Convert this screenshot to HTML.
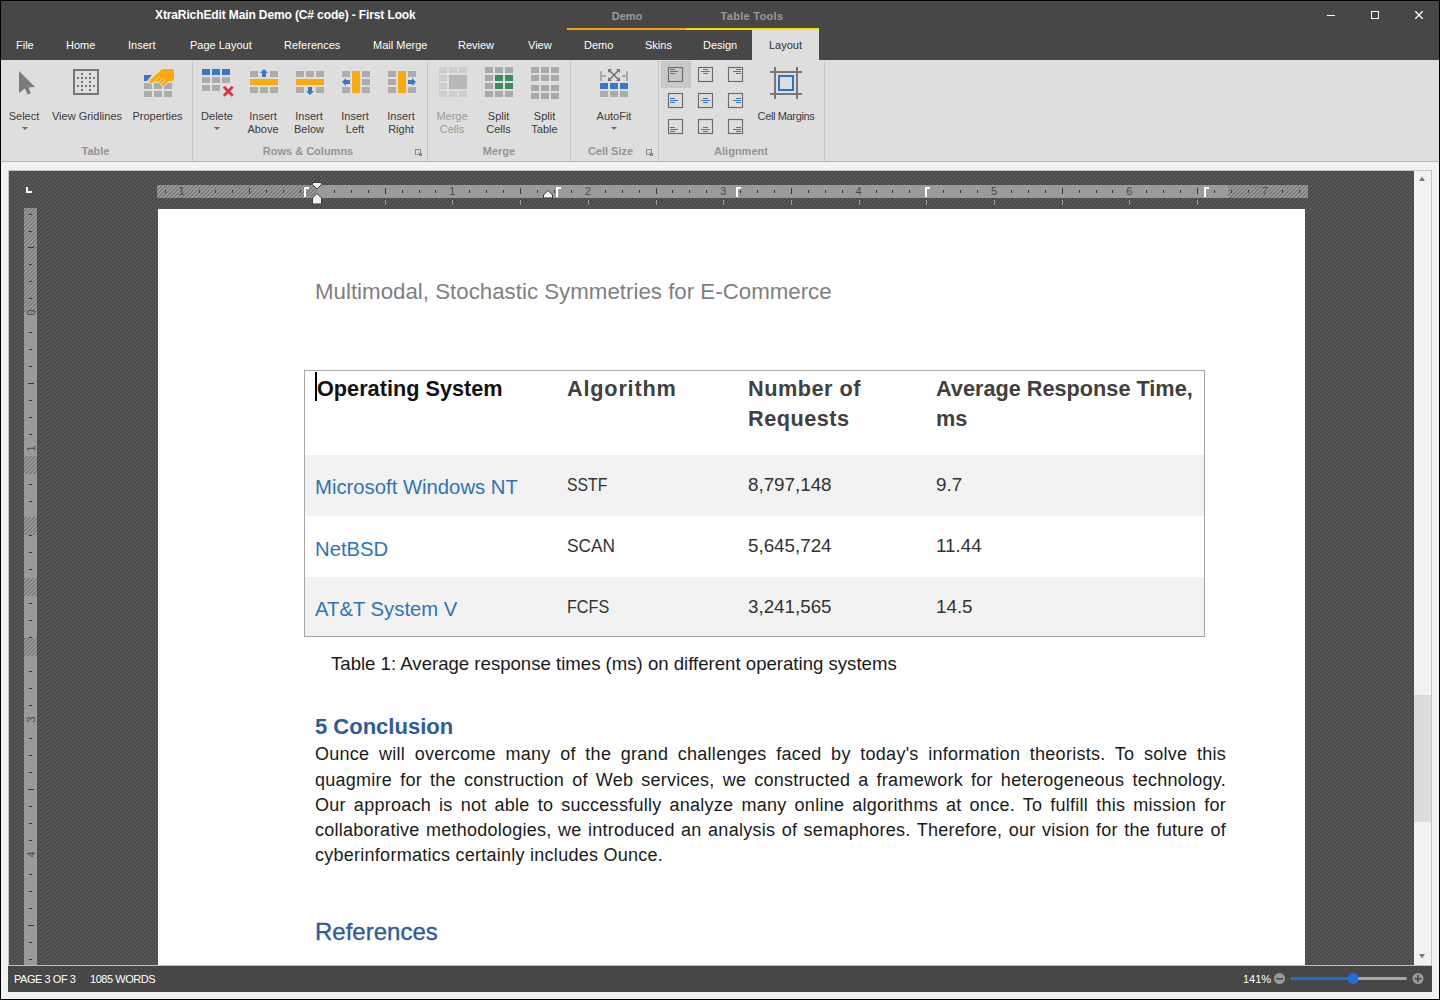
<!DOCTYPE html>
<html><head><meta charset="utf-8">
<style>
*{margin:0;padding:0;box-sizing:border-box}
html,body{width:1440px;height:1000px;overflow:hidden;background:#f2f2f2;font-family:"Liberation Sans",sans-serif}
.a{position:absolute}
#frame{position:absolute;left:0;top:0;width:1440px;height:1000px;border:1px solid #000;pointer-events:none;z-index:100}
#title{left:1px;top:1px;width:1438px;height:59px;background:#474747}
.tt{color:#fff;font-size:12px;line-height:13px;white-space:nowrap}
.tc{text-align:center;line-height:13px;white-space:nowrap}
.tab{top:39px;color:#fff;font-size:11px;line-height:13px;white-space:nowrap}
#ribbon{left:1px;top:60px;width:1438px;height:102px;background:#dedede;border-bottom:1px solid #b4b4b4}
.lb{position:absolute;width:100px;text-align:center;font-size:11px;line-height:13px;color:#3b3b3b;white-space:nowrap}
.gl{font-weight:bold;color:#949494}
#docarea{left:9px;top:171px;width:1405px;height:794px;overflow:hidden}
#status{left:8px;top:965px;width:1424px;height:27px;background:#474747;border-top:1px solid #bdbdbd}
#vscroll{left:1414px;top:171px;width:18px;height:794px;background:#f2f2f2;border-right:1px solid #bdbdbd}
.dt{white-space:nowrap;line-height:1}
.rd{width:20px;text-align:center;font-size:11px;line-height:13px;color:#4a4a4a}
.rdv{width:20px;height:13px;text-align:center;font-size:11px;line-height:13px;color:#4a4a4a;transform:rotate(-90deg)}
.sb{color:#fff;font-size:11px;line-height:13px;white-space:nowrap}
</style></head><body>
<div id="frame"></div>
<div id="title" class="a"></div>
<div id="ribbon" class="a"></div>
<!-- TITLE BAR -->
<div class="a tt" style="left:155px;top:9px;font-weight:bold;font-size:12px;letter-spacing:-0.12px">XtraRichEdit Main Demo (C# code) - First Look</div>
<div class="a tc" style="left:610px;top:10px;width:34px;font-weight:bold;color:#9a9a9a;font-size:11px">Demo</div>
<div class="a tc" style="left:720px;top:10px;width:64px;font-weight:bold;color:#9a9a9a;font-size:11px;letter-spacing:0.3px">Table Tools</div>
<div class="a" style="left:567px;top:28px;width:119px;height:2px;background:#f7a20a"></div>
<div class="a" style="left:686px;top:28px;width:133px;height:2px;background:#f4e000"></div>
<div class="a" style="left:752px;top:30px;width:67px;height:31px;background:#dedede"></div>
<svg class="a" style="left:1300px;top:0" width="140" height="30" viewBox="1300 0 140 30">
<rect x="1327" y="15" width="8" height="1" fill="#fff" shape-rendering="crispEdges"/>
<rect x="1371.5" y="11.5" width="7" height="7" fill="none" stroke="#fff" stroke-width="1" shape-rendering="crispEdges"/>
<path d="M1415.3 11.3 L1422.7 18.7 M1422.7 11.3 L1415.3 18.7" stroke="#fff" stroke-width="1.3"/>
</svg>
<!-- TABS -->
<div class="a tab" style="left:16px">File</div>
<div class="a tab" style="left:66px">Home</div>
<div class="a tab" style="left:128px">Insert</div>
<div class="a tab" style="left:190px">Page Layout</div>
<div class="a tab" style="left:284px">References</div>
<div class="a tab" style="left:373px">Mail Merge</div>
<div class="a tab" style="left:458px">Review</div>
<div class="a tab" style="left:528px">View</div>
<div class="a tab" style="left:584px">Demo</div>
<div class="a tab" style="left:645px">Skins</div>
<div class="a tab" style="left:703px">Design</div>
<div class="a tab" style="left:769px;color:#333">Layout</div>
<!-- RIBBON -->
<svg class="a" style="left:0;top:0" width="900" height="162" viewBox="0 0 900 162">
<g shape-rendering="crispEdges">
<!-- separators -->
<rect x="192" y="61" width="1" height="100" fill="#c4c4c4"/>
<rect x="427" y="61" width="1" height="100" fill="#c4c4c4"/>
<rect x="570" y="61" width="1" height="100" fill="#c4c4c4"/>
<rect x="658" y="61" width="1" height="100" fill="#c4c4c4"/>
<rect x="824" y="61" width="1" height="100" fill="#c4c4c4"/>
<!-- gridlines icon -->
<rect x="74" y="70" width="24" height="24" fill="none" stroke="#777" stroke-width="2"/>
<g fill="#777">
<rect x="81" y="73" width="2" height="2"/><rect x="89" y="73" width="2" height="2"/>
<rect x="77" y="77" width="2" height="2"/><rect x="81" y="77" width="2" height="2"/><rect x="85" y="77" width="2" height="2"/><rect x="89" y="77" width="2" height="2"/><rect x="93" y="77" width="2" height="2"/>
<rect x="81" y="81" width="2" height="2"/><rect x="89" y="81" width="2" height="2"/>
<rect x="77" y="85" width="2" height="2"/><rect x="81" y="85" width="2" height="2"/><rect x="85" y="85" width="2" height="2"/><rect x="89" y="85" width="2" height="2"/><rect x="93" y="85" width="2" height="2"/>
<rect x="81" y="89" width="2" height="2"/><rect x="89" y="89" width="2" height="2"/>
</g>
<!-- properties icon cells -->
<g fill="#acacac">
<rect x="144" y="83" width="8" height="6"/><rect x="154" y="83" width="8" height="6"/><rect x="164" y="83" width="8" height="6"/>
<rect x="144" y="91" width="8" height="6"/><rect x="154" y="91" width="8" height="6"/><rect x="164" y="91" width="8" height="6"/>
</g>
<!-- delete -->
<g fill="#3a76c9">
<rect x="202" y="69" width="8" height="6"/><rect x="212" y="69" width="8" height="6"/><rect x="222" y="69" width="8" height="6"/>
</g>
<g fill="#acacac">
<rect x="202" y="77" width="8" height="6"/><rect x="212" y="77" width="8" height="6"/><rect x="222" y="77" width="8" height="6"/>
<rect x="202" y="85" width="8" height="6"/><rect x="212" y="85" width="8" height="6"/>
</g>
<!-- insert above -->
<g fill="#acacac">
<rect x="250" y="71" width="8" height="6"/><rect x="270" y="71" width="8" height="6"/>
<rect x="250" y="87" width="8" height="6"/><rect x="260" y="87" width="8" height="6"/><rect x="270" y="87" width="8" height="6"/>
</g>
<rect x="250" y="79" width="28" height="6" fill="#fba90b"/>
<!-- insert below -->
<g fill="#acacac">
<rect x="296" y="71" width="8" height="6"/><rect x="306" y="71" width="8" height="6"/><rect x="316" y="71" width="8" height="6"/>
<rect x="296" y="87" width="8" height="6"/><rect x="316" y="87" width="8" height="6"/>
</g>
<rect x="296" y="79" width="28" height="6" fill="#fba90b"/>
<!-- insert left -->
<g fill="#acacac">
<rect x="342" y="71" width="8" height="6"/><rect x="342" y="87" width="8" height="6"/>
<rect x="362" y="71" width="8" height="6"/><rect x="362" y="79" width="8" height="6"/><rect x="362" y="87" width="8" height="6"/>
</g>
<rect x="352" y="71" width="8" height="22" fill="#fba90b"/>
<!-- insert right -->
<g fill="#acacac">
<rect x="388" y="71" width="8" height="6"/><rect x="388" y="79" width="8" height="6"/><rect x="388" y="87" width="8" height="6"/>
<rect x="408" y="71" width="8" height="6"/><rect x="408" y="87" width="8" height="6"/>
</g>
<rect x="398" y="71" width="8" height="22" fill="#fba90b"/>
<!-- merge cells (disabled) -->
<g fill="#cdcdcd">
<rect x="439" y="67" width="8" height="6"/><rect x="449" y="67" width="8" height="6"/><rect x="459" y="67" width="8" height="6"/>
<rect x="439" y="75" width="8" height="6"/><rect x="439" y="83" width="8" height="6"/>
<rect x="439" y="91" width="8" height="6"/><rect x="449" y="91" width="8" height="6"/><rect x="459" y="91" width="8" height="6"/>
</g>
<rect x="449" y="75" width="18" height="14" fill="#b8b8b8"/>
<!-- split cells -->
<g fill="#a9a9a9">
<rect x="485" y="67" width="8" height="6"/><rect x="495" y="67" width="8" height="6"/><rect x="505" y="67" width="8" height="6"/>
<rect x="485" y="75" width="8" height="6"/><rect x="485" y="83" width="8" height="6"/>
<rect x="485" y="91" width="8" height="6"/><rect x="495" y="91" width="8" height="6"/><rect x="505" y="91" width="8" height="6"/>
</g>
<g fill="#3a8c5a">
<rect x="495" y="75" width="8" height="6"/><rect x="505" y="75" width="8" height="6"/>
<rect x="495" y="83" width="8" height="6"/><rect x="505" y="83" width="8" height="6"/>
</g>
<!-- split table -->
<g fill="#a9a9a9">
<rect x="531" y="67" width="8" height="6"/><rect x="541" y="67" width="8" height="6"/><rect x="551" y="67" width="8" height="6"/>
<rect x="531" y="75" width="8" height="6"/><rect x="541" y="75" width="8" height="6"/><rect x="551" y="75" width="8" height="6"/>
<rect x="531" y="85" width="8" height="6"/><rect x="541" y="85" width="8" height="6"/><rect x="551" y="85" width="8" height="6"/>
<rect x="531" y="93" width="8" height="6"/><rect x="541" y="93" width="8" height="6"/><rect x="551" y="93" width="8" height="6"/>
</g>
<!-- autofit -->
<g fill="#3a76c9"><rect x="600" y="83" width="8" height="6"/><rect x="610" y="83" width="8" height="6"/><rect x="620" y="83" width="8" height="6"/></g>
<g fill="#acacac"><rect x="600" y="91" width="8" height="6"/><rect x="610" y="91" width="8" height="6"/><rect x="620" y="91" width="8" height="6"/>
<rect x="600" y="71" width="2" height="10"/><rect x="602" y="75" width="4" height="2"/>
<rect x="626" y="71" width="2" height="10"/><rect x="622" y="75" width="4" height="2"/></g>
<!-- align highlight -->
<rect x="661" y="61" width="30" height="27" fill="#c8c8c8"/>
<!-- cell margins -->
<g fill="#777">
<rect x="774" y="67" width="2" height="32"/><rect x="796" y="67" width="2" height="32"/>
<rect x="770" y="71" width="32" height="2"/><rect x="770" y="93" width="32" height="2"/>
</g>
<rect x="779" y="76" width="14" height="14" fill="none" stroke="#2f6fc4" stroke-width="2"/>
<!-- dialog launchers -->
<rect x="415.5" y="149.5" width="5" height="5" fill="none" stroke="#8a8a8a" stroke-width="1"/><path d="M418 152 L421.5 155.5 M419 155.5 h2.5 v-2.5" stroke="#8a8a8a" stroke-width="1" fill="none"/>
<rect x="646.5" y="149.5" width="5" height="5" fill="none" stroke="#8a8a8a" stroke-width="1"/><path d="M649 152 L652.5 155.5 M650 155.5 h2.5 v-2.5" stroke="#8a8a8a" stroke-width="1" fill="none"/>
</g>
<!-- cursor -->
<path d="M19 71 L35 87 L28.5 87.5 L30.8 93.2 L27.6 94.6 L25 88.6 L19 93 Z" fill="#7a7a7a"/>
<!-- properties hand -->
<path d="M144 75 H152 L147 81 H144 Z" fill="#3a76c9"/>
<path d="M149.5 82.5 Q149 80.5 150.5 79.5 L161 70 Q162 69 163.5 69 H172 Q174 69 174 71 V79 Q174 81 172 81 H168.5 L164 85.5 Q162.5 86.5 161.5 85 L160.5 83.5 L159.5 83 L157 81.5 L155.5 80.5 L151.5 83.5 Q150 84 149.5 82.5 Z" fill="#fba90b" stroke="#e6e6e6" stroke-width="1.2" paint-order="stroke"/>
<path d="M155.5 80.5 L160 76 M158 83 L162.5 78.5 M160.5 84.5 L165 80" stroke="#f4e6c8" stroke-width="0.8"/>
<!-- delete X -->
<path d="M223.8 86.8 L232.7 95.7 M232.7 86.8 L223.8 95.7" stroke="#e0313f" stroke-width="2.7"/>
<!-- arrows -->
<path d="M264 69 L268 73 H266 V77 H262 V73 H260 Z" fill="#3a76c9"/>
<path d="M310 95 L314 91 H312 V87 H308 V91 H306 Z" fill="#3a76c9"/>
<path d="M342 82 L346 78 V80 H350 V84 H346 V86 Z" fill="#3a76c9"/>
<path d="M416 82 L412 78 V80 H408 V84 H412 V86 Z" fill="#3a76c9"/>
<!-- autofit X -->
<g stroke="#777" stroke-width="1.7"><path d="M609.5 70.5 L618.5 79.5 M618.5 70.5 L609.5 79.5"/></g>
<g fill="#777">
<path d="M608 69 H612 L608 73 Z"/><path d="M620 69 H616 L620 73 Z"/>
<path d="M608 81 H612 L608 77 Z"/><path d="M620 81 H616 L620 77 Z"/>
</g>
<!-- alignment boxes -->
<g fill="none" stroke="#6c6c6c" stroke-width="1.15">
<rect x="668.5" y="67.5" width="14" height="14"/><rect x="698.5" y="67.5" width="14" height="14"/><rect x="728.5" y="67.5" width="14" height="14"/><rect x="668.5" y="93.5" width="14" height="14"/><rect x="698.5" y="93.5" width="14" height="14"/><rect x="728.5" y="93.5" width="14" height="14"/><rect x="668.5" y="119.5" width="14" height="14"/><rect x="698.5" y="119.5" width="14" height="14"/><rect x="728.5" y="119.5" width="14" height="14"/>
</g>
<g stroke="#3a76c9" stroke-width="1">
<path d="M670 69.5 h5 M670 71.5 h8 M670 73.5 h5"/>
<path d="M703 69.5 h5 M701 71.5 h9 M703 73.5 h5"/>
<path d="M736 69.5 h5 M733 71.5 h8 M736 73.5 h5"/>
<path d="M670 98.5 h5 M670 100.5 h8 M670 102.5 h5"/>
<path d="M703 98.5 h5 M701 100.5 h9 M703 102.5 h5"/>
<path d="M736 98.5 h5 M733 100.5 h8 M736 102.5 h5"/>
<path d="M670 127.5 h5 M670 129.5 h8 M670 131.5 h5"/>
<path d="M703 127.5 h5 M701 129.5 h9 M703 131.5 h5"/>
<path d="M736 127.5 h5 M733 129.5 h8 M736 131.5 h5"/>
</g>
<!-- dropdown arrows -->
<g fill="#6a6a6a">
<path d="M22 127 H28 L25 130 Z"/><path d="M214 127 H220 L217 130 Z"/><path d="M611 127 H617 L614 130 Z"/>
</g>
</svg>
<div class="lb" style="left:-26px;top:110px">Select</div>
<div class="lb" style="left:37px;top:110px">View Gridlines</div>
<div class="lb" style="left:107.5px;top:110px">Properties</div>
<div class="lb" style="left:167px;top:110px">Delete</div>
<div class="lb" style="left:213px;top:110px">Insert<br>Above</div>
<div class="lb" style="left:259px;top:110px">Insert<br>Below</div>
<div class="lb" style="left:305px;top:110px">Insert<br>Left</div>
<div class="lb" style="left:351px;top:110px">Insert<br>Right</div>
<div class="lb" style="left:402px;top:110px;color:#9a9a9a">Merge<br>Cells</div>
<div class="lb" style="left:448.5px;top:110px">Split<br>Cells</div>
<div class="lb" style="left:494.5px;top:110px">Split<br>Table</div>
<div class="lb" style="left:564px;top:110px">AutoFit</div>
<div class="lb" style="left:736px;top:110px;letter-spacing:-0.35px">Cell Margins</div>
<div class="lb gl" style="left:45.5px;top:145px">Table</div>
<div class="lb gl" style="left:258px;top:145px">Rows &amp; Columns</div>
<div class="lb gl" style="left:449px;top:145px">Merge</div>
<div class="lb gl" style="left:560.5px;top:145px">Cell Size</div>
<div class="lb gl" style="left:691px;top:145px">Alignment</div>
<div id="docarea" class="a">
<svg width="1405" height="794" style="position:absolute;left:0;top:0">
<defs><pattern id="st" x="0" y="0" width="4" height="4" patternUnits="userSpaceOnUse">
<rect width="4" height="4" fill="#484848"/>
<rect x="0" y="0" width="2" height="1" fill="#595959"/>
<rect x="3" y="1" width="1" height="1" fill="#595959"/><rect x="0" y="1" width="1" height="1" fill="#595959"/>
<rect x="2" y="2" width="2" height="1" fill="#595959"/>
<rect x="1" y="3" width="2" height="1" fill="#595959"/>
</pattern>
<pattern id="rs" x="0" y="0" width="4" height="4" patternUnits="userSpaceOnUse">
<rect width="4" height="4" fill="#7a7a7a"/>
<rect x="0" y="0" width="2" height="1" fill="#9c9c9c"/>
<rect x="3" y="1" width="1" height="1" fill="#9c9c9c"/><rect x="0" y="1" width="1" height="1" fill="#9c9c9c"/>
<rect x="2" y="2" width="2" height="1" fill="#9c9c9c"/>
<rect x="1" y="3" width="2" height="1" fill="#9c9c9c"/>
</pattern></defs>
<rect width="1405" height="794" fill="url(#st)" shape-rendering="crispEdges"/>
<pattern id="st2" href="#st" x="2" y="0"/>
<rect x="38" y="37" width="1367" height="757" fill="url(#st2)" shape-rendering="crispEdges"/>
</svg>
</div>
<svg class="a" style="left:0;top:0" width="1440" height="1000" viewBox="0 0 1440 1000" shape-rendering="crispEdges">
<path d="M26 187 h2 v4 h4 v2 h-6 z" fill="#fff"/>
<rect x="157" y="185" width="160" height="13" fill="url(#rs)"/>
<rect x="317" y="185" width="911" height="13" fill="#9a9a9a"/>
<rect x="1228" y="185" width="80" height="13" fill="url(#rs)"/>
<rect x="165" y="190" width="1" height="3" fill="#3a3a3a"/>
<rect x="199" y="190" width="1" height="3" fill="#3a3a3a"/>
<rect x="215" y="190" width="1" height="3" fill="#3a3a3a"/>
<rect x="232" y="190" width="1" height="3" fill="#3a3a3a"/>
<rect x="249" y="188" width="1" height="6" fill="#3a3a3a"/>
<rect x="266" y="190" width="1" height="3" fill="#3a3a3a"/>
<rect x="283" y="190" width="1" height="3" fill="#3a3a3a"/>
<rect x="300" y="190" width="1" height="3" fill="#3a3a3a"/>
<rect x="334" y="190" width="1" height="3" fill="#3a3a3a"/>
<rect x="351" y="190" width="1" height="3" fill="#3a3a3a"/>
<rect x="368" y="190" width="1" height="3" fill="#3a3a3a"/>
<rect x="385" y="188" width="1" height="6" fill="#3a3a3a"/>
<rect x="402" y="190" width="1" height="3" fill="#3a3a3a"/>
<rect x="419" y="190" width="1" height="3" fill="#3a3a3a"/>
<rect x="435" y="190" width="1" height="3" fill="#3a3a3a"/>
<rect x="469" y="190" width="1" height="3" fill="#3a3a3a"/>
<rect x="486" y="190" width="1" height="3" fill="#3a3a3a"/>
<rect x="503" y="190" width="1" height="3" fill="#3a3a3a"/>
<rect x="520" y="188" width="1" height="6" fill="#3a3a3a"/>
<rect x="537" y="190" width="1" height="3" fill="#3a3a3a"/>
<rect x="554" y="190" width="1" height="3" fill="#3a3a3a"/>
<rect x="571" y="190" width="1" height="3" fill="#3a3a3a"/>
<rect x="605" y="190" width="1" height="3" fill="#3a3a3a"/>
<rect x="622" y="190" width="1" height="3" fill="#3a3a3a"/>
<rect x="639" y="190" width="1" height="3" fill="#3a3a3a"/>
<rect x="656" y="188" width="1" height="6" fill="#3a3a3a"/>
<rect x="672" y="190" width="1" height="3" fill="#3a3a3a"/>
<rect x="689" y="190" width="1" height="3" fill="#3a3a3a"/>
<rect x="706" y="190" width="1" height="3" fill="#3a3a3a"/>
<rect x="740" y="190" width="1" height="3" fill="#3a3a3a"/>
<rect x="757" y="190" width="1" height="3" fill="#3a3a3a"/>
<rect x="774" y="190" width="1" height="3" fill="#3a3a3a"/>
<rect x="791" y="188" width="1" height="6" fill="#3a3a3a"/>
<rect x="808" y="190" width="1" height="3" fill="#3a3a3a"/>
<rect x="825" y="190" width="1" height="3" fill="#3a3a3a"/>
<rect x="842" y="190" width="1" height="3" fill="#3a3a3a"/>
<rect x="876" y="190" width="1" height="3" fill="#3a3a3a"/>
<rect x="892" y="190" width="1" height="3" fill="#3a3a3a"/>
<rect x="909" y="190" width="1" height="3" fill="#3a3a3a"/>
<rect x="926" y="188" width="1" height="6" fill="#3a3a3a"/>
<rect x="943" y="190" width="1" height="3" fill="#3a3a3a"/>
<rect x="960" y="190" width="1" height="3" fill="#3a3a3a"/>
<rect x="977" y="190" width="1" height="3" fill="#3a3a3a"/>
<rect x="1011" y="190" width="1" height="3" fill="#3a3a3a"/>
<rect x="1028" y="190" width="1" height="3" fill="#3a3a3a"/>
<rect x="1045" y="190" width="1" height="3" fill="#3a3a3a"/>
<rect x="1062" y="188" width="1" height="6" fill="#3a3a3a"/>
<rect x="1079" y="190" width="1" height="3" fill="#3a3a3a"/>
<rect x="1096" y="190" width="1" height="3" fill="#3a3a3a"/>
<rect x="1112" y="190" width="1" height="3" fill="#3a3a3a"/>
<rect x="1146" y="190" width="1" height="3" fill="#3a3a3a"/>
<rect x="1163" y="190" width="1" height="3" fill="#3a3a3a"/>
<rect x="1180" y="190" width="1" height="3" fill="#3a3a3a"/>
<rect x="1197" y="188" width="1" height="6" fill="#3a3a3a"/>
<rect x="1214" y="190" width="1" height="3" fill="#3a3a3a"/>
<rect x="1231" y="190" width="1" height="3" fill="#3a3a3a"/>
<rect x="1248" y="190" width="1" height="3" fill="#3a3a3a"/>
<rect x="1282" y="190" width="1" height="3" fill="#3a3a3a"/>
<rect x="1299" y="190" width="1" height="3" fill="#3a3a3a"/>
<rect x="385" y="200" width="1" height="5" fill="#9a9a9a"/>
<rect x="452" y="200" width="1" height="5" fill="#9a9a9a"/>
<rect x="520" y="200" width="1" height="5" fill="#9a9a9a"/>
<rect x="588" y="200" width="1" height="5" fill="#9a9a9a"/>
<rect x="656" y="200" width="1" height="5" fill="#9a9a9a"/>
<rect x="723" y="200" width="1" height="5" fill="#9a9a9a"/>
<rect x="791" y="200" width="1" height="5" fill="#9a9a9a"/>
<rect x="859" y="200" width="1" height="5" fill="#9a9a9a"/>
<rect x="926" y="200" width="1" height="5" fill="#9a9a9a"/>
<rect x="994" y="200" width="1" height="5" fill="#9a9a9a"/>
<rect x="1062" y="200" width="1" height="5" fill="#9a9a9a"/>
<rect x="1129" y="200" width="1" height="5" fill="#9a9a9a"/>
<rect x="1197" y="200" width="1" height="5" fill="#9a9a9a"/>
<rect x="24" y="208" width="13" height="105" fill="url(#rs)"/>
<rect x="24" y="313" width="13" height="652" fill="#9a9a9a"/>
<rect x="24" y="456" width="13" height="18" fill="url(#rs)"/>
<rect x="24" y="517" width="13" height="18" fill="url(#rs)"/>
<rect x="24" y="578" width="13" height="18" fill="url(#rs)"/>
<rect x="24" y="638" width="13" height="18" fill="url(#rs)"/>
<rect x="29" y="214" width="3" height="1" fill="#3a3a3a"/>
<rect x="29" y="231" width="3" height="1" fill="#3a3a3a"/>
<rect x="28" y="247" width="6" height="1" fill="#3a3a3a"/>
<rect x="29" y="264" width="3" height="1" fill="#3a3a3a"/>
<rect x="29" y="281" width="3" height="1" fill="#3a3a3a"/>
<rect x="29" y="298" width="3" height="1" fill="#3a3a3a"/>
<rect x="29" y="332" width="3" height="1" fill="#3a3a3a"/>
<rect x="29" y="349" width="3" height="1" fill="#3a3a3a"/>
<rect x="29" y="366" width="3" height="1" fill="#3a3a3a"/>
<rect x="28" y="383" width="6" height="1" fill="#3a3a3a"/>
<rect x="29" y="400" width="3" height="1" fill="#3a3a3a"/>
<rect x="29" y="417" width="3" height="1" fill="#3a3a3a"/>
<rect x="29" y="434" width="3" height="1" fill="#3a3a3a"/>
<rect x="29" y="484" width="3" height="1" fill="#3a3a3a"/>
<rect x="29" y="501" width="3" height="1" fill="#3a3a3a"/>
<rect x="29" y="535" width="3" height="1" fill="#3a3a3a"/>
<rect x="29" y="552" width="3" height="1" fill="#3a3a3a"/>
<rect x="29" y="569" width="3" height="1" fill="#3a3a3a"/>
<rect x="29" y="603" width="3" height="1" fill="#3a3a3a"/>
<rect x="29" y="620" width="3" height="1" fill="#3a3a3a"/>
<rect x="29" y="637" width="3" height="1" fill="#3a3a3a"/>
<rect x="29" y="671" width="3" height="1" fill="#3a3a3a"/>
<rect x="29" y="688" width="3" height="1" fill="#3a3a3a"/>
<rect x="29" y="705" width="3" height="1" fill="#3a3a3a"/>
<rect x="29" y="738" width="3" height="1" fill="#3a3a3a"/>
<rect x="29" y="755" width="3" height="1" fill="#3a3a3a"/>
<rect x="29" y="772" width="3" height="1" fill="#3a3a3a"/>
<rect x="28" y="789" width="6" height="1" fill="#3a3a3a"/>
<rect x="29" y="806" width="3" height="1" fill="#3a3a3a"/>
<rect x="29" y="823" width="3" height="1" fill="#3a3a3a"/>
<rect x="29" y="840" width="3" height="1" fill="#3a3a3a"/>
<rect x="29" y="874" width="3" height="1" fill="#3a3a3a"/>
<rect x="29" y="891" width="3" height="1" fill="#3a3a3a"/>
<rect x="29" y="908" width="3" height="1" fill="#3a3a3a"/>
<rect x="28" y="925" width="6" height="1" fill="#3a3a3a"/>
<rect x="29" y="942" width="3" height="1" fill="#3a3a3a"/>
<rect x="29" y="959" width="3" height="1" fill="#3a3a3a"/>
</svg>
<div class="a rd" style="left:171.6px;top:185px">1</div>
<div class="a rd" style="left:442.4px;top:185px">1</div>
<div class="a rd" style="left:577.8px;top:185px">2</div>
<div class="a rd" style="left:713.2px;top:185px">3</div>
<div class="a rd" style="left:848.6px;top:185px">4</div>
<div class="a rd" style="left:984.0px;top:185px">5</div>
<div class="a rd" style="left:1119.4px;top:185px">6</div>
<div class="a rd" style="left:1254.8px;top:185px">7</div>
<div class="a rdv" style="left:20.5px;top:441.7px">1</div>
<div class="a rdv" style="left:20.5px;top:712.5px">3</div>
<div class="a rdv" style="left:20.5px;top:847.9px">4</div>
<div class="a rdv" style="left:20.5px;top:306.3px">0</div>
<div class="a" style="left:158px;top:209px;width:1147px;height:756px;background:#fff"></div>
<svg class="a" style="left:0;top:0" width="1440" height="230" viewBox="0 0 1440 230">
<path d="M312.5 182.5 h9 v2 l-4.5 4.5 l-4.5 -4.5 z" fill="#f0f0f0" stroke="#3a3a3a" stroke-width="1"/>
<path d="M317 193.5 l4.5 4.5 v6 h-9 v-6 z" fill="#f0f0f0" stroke="#3a3a3a" stroke-width="1"/>
<path d="M543.5 198 v-3 l4.5 -4.5 l4.5 4.5 v3 z" fill="#f0f0f0" stroke="#3a3a3a" stroke-width="1"/>
<g fill="#fff" shape-rendering="crispEdges">
<path d="M304 187 h5 v2 h-3 v8 h-2 z"/>
<path d="M556 187 h5 v2 h-3 v8 h-2 z"/>
<path d="M736 187 h5 v2 h-3 v8 h-2 z"/>
<path d="M925 187 h5 v2 h-3 v8 h-2 z"/>
<path d="M1204 187 h5 v2 h-3 v8 h-2 z"/>
</g>
</svg>
<div class="a dt" style="left:315px;top:280.9px;font-size:22.3px;color:#7f7f7f">Multimodal, Stochastic Symmetries for E-Commerce</div>
<div class="a" style="left:304px;top:370px;width:901px;height:267px;border:1px solid #a6a6a6;background:#fff"></div>
<div class="a" style="left:305px;top:455px;width:899px;height:61px;background:#f2f2f2"></div>
<div class="a" style="left:305px;top:577px;width:899px;height:59px;background:#f2f2f2"></div>
<div class="a" style="left:315px;top:372px;width:2px;height:29px;background:#000"></div>
<div class="a dt" style="left:317px;top:374.1px;font-size:21.7px;font-weight:bold;line-height:30px;color:#111">Operating System</div>
<div class="a dt" style="left:567px;top:374.1px;font-size:21.7px;font-weight:bold;line-height:30px;color:#404040;letter-spacing:0.8px">Algorithm</div>
<div class="a dt" style="left:748px;top:374.1px;font-size:21.7px;font-weight:bold;line-height:30px;color:#404040;letter-spacing:0.5px">Number of<br>Requests</div>
<div class="a dt" style="left:936px;top:374.1px;font-size:21.7px;font-weight:bold;line-height:30px;color:#404040">Average Response Time,<br>ms</div>
<div class="a dt" style="left:315px;top:477.2px;font-size:20.3px;color:#2e74b5">Microsoft Windows NT</div>
<div class="a dt" style="left:567px;top:475.7px;font-size:18.8px;color:#333;transform:scaleX(0.84);transform-origin:0 0">SSTF</div>
<div class="a dt" style="left:748px;top:475.7px;font-size:18.8px;color:#333">8,797,148</div>
<div class="a dt" style="left:936px;top:475.7px;font-size:18.8px;color:#333">9.7</div>
<div class="a dt" style="left:315px;top:538.6px;font-size:20.3px;color:#2e74b5">NetBSD</div>
<div class="a dt" style="left:567px;top:536.6px;font-size:18.8px;color:#333;transform:scaleX(0.92);transform-origin:0 0">SCAN</div>
<div class="a dt" style="left:748px;top:536.6px;font-size:18.8px;color:#333">5,645,724</div>
<div class="a dt" style="left:936px;top:536.6px;font-size:18.8px;color:#333">11.44</div>
<div class="a dt" style="left:315px;top:599.3px;font-size:20.3px;color:#2e74b5">AT&amp;T System V</div>
<div class="a dt" style="left:567px;top:597.8px;font-size:18.8px;color:#333;transform:scaleX(0.86);transform-origin:0 0">FCFS</div>
<div class="a dt" style="left:748px;top:597.8px;font-size:18.8px;color:#333">3,241,565</div>
<div class="a dt" style="left:936px;top:597.8px;font-size:18.8px;color:#333">14.5</div>
<div class="a dt" style="left:331px;top:655.3px;font-size:18.6px;color:#1a1a1a">Table 1: Average response times (ms) on different operating systems</div>
<div class="a dt" style="left:315px;top:716.0px;font-size:22px;font-weight:bold;color:#2f5b96">5 Conclusion</div>
<div class="a dt" style="left:315px;top:745.2px;font-size:18px;color:#1a1a1a;letter-spacing:0.26px;text-align:justify;text-align-last:justify;width:911px;">Ounce will overcome many of the grand challenges faced by today's information theorists. To solve this</div>
<div class="a dt" style="left:315px;top:770.5px;font-size:18px;color:#1a1a1a;letter-spacing:0.26px;text-align:justify;text-align-last:justify;width:911px;">quagmire for the construction of Web services, we constructed a framework for heterogeneous technology.</div>
<div class="a dt" style="left:315px;top:795.8px;font-size:18px;color:#1a1a1a;letter-spacing:0.26px;text-align:justify;text-align-last:justify;width:911px;">Our approach is not able to successfully analyze many online algorithms at once. To fulfill this mission for</div>
<div class="a dt" style="left:315px;top:821.1px;font-size:18px;color:#1a1a1a;letter-spacing:0.26px;text-align:justify;text-align-last:justify;width:911px;">collaborative methodologies, we introduced an analysis of semaphores. Therefore, our vision for the future of</div>
<div class="a dt" style="left:315px;top:846.4px;font-size:18px;color:#1a1a1a;letter-spacing:0.26px;">cyberinformatics certainly includes Ounce.</div>
<div class="a dt" style="left:315px;top:920.3px;font-size:24px;color:#2f5b96;-webkit-text-stroke:0.35px #2f5b96">References</div><div class="a" style="left:8px;top:170px;width:1424px;height:796px;border:1px solid #c4c4c4;border-bottom:0"></div>
<div class="a" style="left:1414px;top:171px;width:17px;height:794px;background:#f2f2f2"></div>
<div class="a" style="left:1414px;top:695px;width:17px;height:127px;background:#dcdcdc"></div>
<svg class="a" style="left:1414px;top:171px" width="18" height="794">
<path d="M5 10 L8 5.5 L11 10 Z" fill="#7a7a7a"/>
<path d="M5 783 L8 787.5 L11 783 Z" fill="#7a7a7a"/>
</svg>
<div id="status" class="a"></div>
<div class="a sb" style="left:14px;top:973px;letter-spacing:-0.45px">PAGE 3 OF 3</div>
<div class="a sb" style="left:90px;top:973px;letter-spacing:-0.45px">1085 WORDS</div>
<div class="a sb" style="left:1243px;top:973px">141%</div>
<svg class="a" style="left:1260px;top:966px" width="172" height="26">
<circle cx="19.5" cy="12.5" r="5.5" fill="#9a9a9a"/>
<rect x="16" y="12" width="7" height="1.5" fill="#474747"/>
<rect x="31" y="11" width="116" height="3" rx="1.5" fill="#a8a8a8"/>
<rect x="31" y="11" width="62" height="3" rx="1.5" fill="#1e6ed8"/>
<circle cx="93" cy="12.5" r="5.5" fill="#1e6ed8"/>
<circle cx="158" cy="12.5" r="5.5" fill="#9a9a9a"/>
<rect x="154.5" y="12" width="7" height="1.5" fill="#474747"/>
<rect x="157.25" y="9" width="1.5" height="7" fill="#474747"/>
</svg>
</body></html>
